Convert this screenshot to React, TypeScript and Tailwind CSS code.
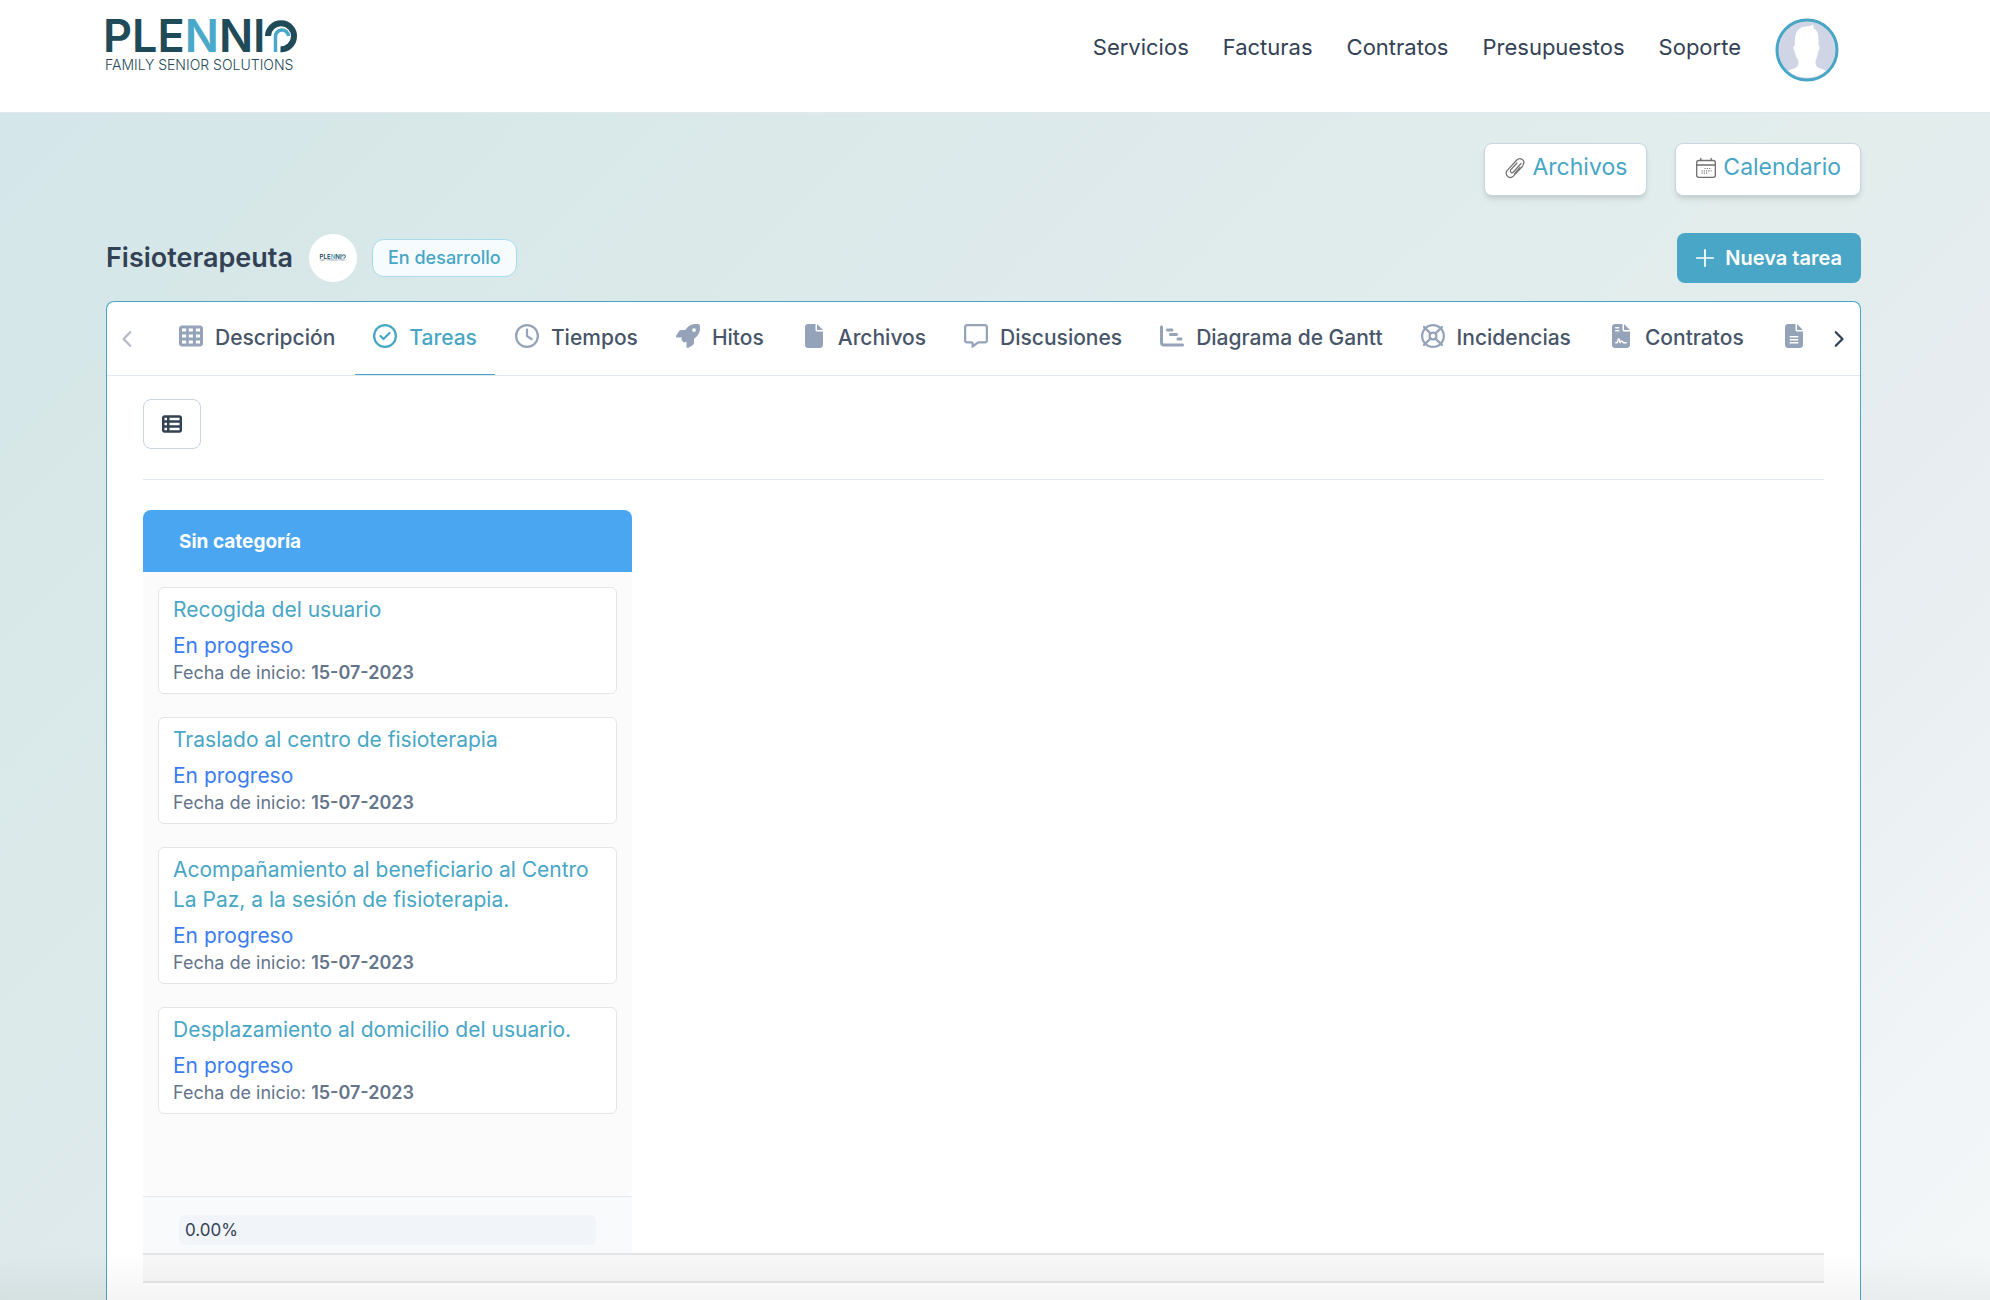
import React from "react";
import type { IconType } from "react-icons";
import {
    FaTableCells,
    FaRegCircleCheck,
    FaRegClock,
    FaRocket,
    FaFile,
    FaRegMessage,
    FaChartGantt,
    FaRegLifeRing,
    FaFileContract,
    FaFileLines,
    FaChevronLeft,
    FaChevronRight,
    FaTableList,
} from "react-icons/fa6";
import { Plus } from "lucide-react";

interface Tab {
    label: string;
    icon: IconType;
    active?: boolean;
}

interface Task {
    title: string;
    status: string;
    start: string;
}

const navLinks = ["Servicios", "Facturas", "Contratos", "Presupuestos", "Soporte"];

const tabs: Tab[] = [
    { label: "Descripción", icon: FaTableCells },
    { label: "Tareas", icon: FaRegCircleCheck, active: true },
    { label: "Tiempos", icon: FaRegClock },
    { label: "Hitos", icon: FaRocket },
    { label: "Archivos", icon: FaFile },
    { label: "Discusiones", icon: FaRegMessage },
    { label: "Diagrama de Gantt", icon: FaChartGantt },
    { label: "Incidencias", icon: FaRegLifeRing },
    { label: "Contratos", icon: FaFileContract },
    { label: "", icon: FaFileLines },
];

const tasks: Task[] = [
    { title: "Recogida del usuario", status: "En progreso", start: "15-07-2023" },
    { title: "Traslado al centro de fisioterapia", status: "En progreso", start: "15-07-2023" },
    {
        title: "Acompañamiento al beneficiario al Centro La Paz, a la sesión de fisioterapia.",
        status: "En progreso",
        start: "15-07-2023",
    },
    { title: "Desplazamiento al domicilio del usuario.", status: "En progreso", start: "15-07-2023" },
];

const Logo: React.FC<{ className?: string }> = ({ className }) => (
    <svg viewBox="0 0 192 54" className={`overflow-visible ${className}`} role="img" aria-label="Plennio Family Senior Solutions">
        <text x="-3" y="34" fontFamily="Inter, sans-serif" fontWeight="600" fontSize="45" fill="#1f4a58">
            PLE<tspan fill="#4aa8c8">N</tspan>NI
        </text>
        <path d="M162 18a13 13 0 1 1 12.500 13.200" fill="none" stroke="#1f4a58" strokeWidth="6" />
        <path d="M169.500 34V19a6.500 6.500 0 0 1 13 -1" fill="none" stroke="#4aa8c8" strokeWidth="3.5" />
        <text x="-1" y="52" fontFamily="Inter, sans-serif" fontWeight="300" fontSize="14" fill="#1f4a58">
            FAMILY SENIOR SOLUTIONS
        </text>
    </svg>
);

const Avatar: React.FC = () => (
    <svg viewBox="0 0 64 64" className="size-16" role="img" aria-label="Perfil">
        <circle cx="32" cy="32" r="30" fill="#d0d5e5" />
        <path
            d="M13 53C17 50 23 51 23.500 45C24 42 20 38 19.500 33C18 31 18 28 20 27C19 14 23 9 31 8.500C34 8 37 8 37.500 6.500C39 8 39 9 38 10C43 12 44 17 43.500 27C45 28 45 31 43.500 33C43 38 40 42 40.500 45C41 51 47 50 51 53A30 30 0 0 1 13 53Z"
            fill="#fff"
        />
        <circle cx="32" cy="32" r="30" fill="none" stroke="#47a6c6" strokeWidth="3" />
    </svg>
);

const ClipIcon: React.FC = () => (
    <svg viewBox="0 0 22 22" className="mt-1.5 size-[22px]" fill="none" stroke="#6f6f6f" strokeWidth="1.2" strokeLinecap="round" strokeLinejoin="round">
        <path d="M18.800 9L9.300 19.200C6 22.500 .200 18.500 3 13.600L12.800 3C16.400 -.500 22 3.500 19 8" />
        <path d="M17 6.500L9.500 15C7.800 16.800 5.300 14.800 6.700 12.900L13 6" />
        <path d="M16 10.500L10.500 16.800" />
    </svg>
);

const CalendarIcon: React.FC = () => (
    <svg viewBox="0 0 22 22" className="mt-1.5 size-[22px]" fill="none" stroke="#6f6f6f" strokeWidth="1.3" strokeLinecap="round">
        <rect x="1.700" y="3.500" width="18.600" height="16.800" rx="2" />
        <path d="M1.700 8H20.300M5.800 1.300V3.500M16.200 1.300V3.500" />
        <path d="M9.500 11.500H16.500M6.500 13.800H16.500M6.500 16.200H13.500" strokeWidth="1.200" strokeDasharray="1.100 1.200" strokeLinecap="butt" />
    </svg>
);

const Header: React.FC = () => (
    <header className="flex h-[113px] items-start justify-between border-b border-slate-200 bg-white pt-[18px] pr-[151px] pl-[106px]">
        <a href="#inicio">
            <Logo className="w-[192px]" />
        </a>
        <nav className="flex items-center gap-[34px] text-[22px] leading-[30px]">
            {navLinks.map((link) => (
                <a key={link} href={`#${link.toLowerCase()}`} className="pb-1.5">
                    {link}
                </a>
            ))}
            <button type="button" className="rounded-full">
                <Avatar />
            </button>
        </nav>
    </header>
);

const TaskCard: React.FC<{ task: Task }> = ({ task }) => (
    <li className="rounded-md border border-neutral-200 bg-white px-3.5 pt-[7px] pb-2">
        <a href="#tarea" className="block text-[21px] leading-[30px] text-[#47a6c6]">
            {task.title}
        </a>
        <p className="mt-1.5 text-[21px] leading-[30px] text-[#3b7df0]">{task.status}</p>
        <p className="text-[18px] leading-6 text-[#64748b]">
            Fecha de inicio: <span className="font-semibold">{task.start}</span>
        </p>
    </li>
);

export default function App() {
    return (
        <div className="flex min-h-screen flex-col bg-[linear-gradient(135deg,#d3e6ea_0%,#d9e8e8_22%,#e0ebec_46%,#e2edec_62%,#e7ecf0_72%,#f4f8f9_100%)] font-[Inter,sans-serif] text-[#334155]">
            <Header />
            <main className="flex grow flex-col pr-[129px] pl-[106px]">
                <div className="mt-[30px] flex justify-end gap-7">
                    <a href="#archivos" className="flex h-[53px] items-start gap-1.5 rounded-lg border border-slate-300 bg-white px-[19px] pt-[7px] text-[23px] leading-8 text-[#47a6c6] shadow-md">
                        <ClipIcon />
                        Archivos
                    </a>
                    <a href="#calendario" className="flex h-[53px] items-start gap-1.5 rounded-lg border border-slate-300 bg-white px-[19px] pt-[7px] text-[23px] leading-8 text-[#47a6c6] shadow-md">
                        <CalendarIcon />
                        Calendario
                    </a>
                </div>

                <div className="mt-[37px] flex items-center justify-between">
                    <div className="flex items-center">
                        <h1 className="text-[27px] leading-9 font-semibold">Fisioterapeuta</h1>
                        <span className="ml-4 flex size-12 items-center justify-center rounded-full bg-white">
                            <Logo className="w-[26px]" />
                        </span>
                        <span className="ml-[15px] rounded-xl border border-[#a5dcea] bg-[#f6fbfe] px-[15px] py-1 text-[18px] leading-7 font-medium text-[#47a6c6]">
                            En desarrollo
                        </span>
                    </div>
                    <button type="button" className="flex h-[50px] items-center gap-1.5 rounded-lg bg-[#4aa6c6] pr-[19px] pl-3.5 text-[20px] font-semibold text-white">
                        <Plus className="size-7" strokeWidth={1.5} />
                        Nueva tarea
                    </button>
                </div>

                <section className="mt-[18px] grow rounded-t-lg border border-b-0 border-[#47a6c6] bg-white">
                    <div className="flex h-[74px] border-b border-slate-200">
                        <button type="button" aria-label="Anterior" className="flex w-[38px] shrink-0 items-center justify-center pl-1 text-[#b3bac5]">
                            <FaChevronLeft className="size-[18px]" />
                        </button>
                        <div className="flex min-w-0 grow gap-0.5 overflow-hidden pl-4">
                            {tabs.map(({ label, icon: Icon, active }) => (
                                <a
                                    key={label}
                                    href="#tab"
                                    className={`flex h-[74px] shrink-0 items-center border-b-2 px-[18px] text-[21px] font-medium ${
                                        active ? "border-[#47a6c6] text-[#47a6c6]" : "border-transparent text-[#475569]"
                                    }`}
                                >
                                    <span className="w-9 pb-1">
                                        <Icon className={`h-6 w-auto ${active ? "" : "text-[#94a3b8]"}`} />
                                    </span>
                                    {label}
                                </a>
                            ))}
                        </div>
                        <button type="button" aria-label="Siguiente" className="flex w-[45px] shrink-0 items-center justify-center">
                            <FaChevronRight className="size-[18px]" />
                        </button>
                    </div>

                    <div className="px-9 pt-[23px]">
                        <button type="button" aria-label="Ver como lista" className="flex h-[50px] w-[58px] items-center justify-center rounded-lg border border-slate-300">
                            <FaTableList className="size-5" />
                        </button>
                        <hr className="mt-[30px] border-slate-200" />

                        <div className="mt-[30px] w-[489px]">
                            <h2 className="rounded-t-lg bg-[#4aa6f0] px-9 pt-[17px] pb-[15px] text-[19px] leading-[30px] font-bold text-white">
                                Sin categoría
                            </h2>
                            <ul className="flex flex-col gap-[23px] rounded-lg bg-[#fbfbfb] px-[15px] pt-[15px] pb-[82px]">
                                {tasks.map((task) => (
                                    <TaskCard key={task.title} task={task} />
                                ))}
                            </ul>
                            <div className="border-t border-slate-200 bg-slate-50 px-9 pt-[18px] pb-2">
                                <div className="rounded-md bg-slate-100 px-1.5 text-[17px] leading-[30px]">0.00%</div>
                            </div>
                        </div>
                        <div className="h-[30px] border-y-2 border-neutral-200 bg-[#f8f8f8]" />
                    </div>
                </section>
            </main>
            <div className="pointer-events-none fixed inset-x-0 bottom-0 h-12 bg-linear-to-t from-black/4 to-transparent" />
        </div>
    );
}
